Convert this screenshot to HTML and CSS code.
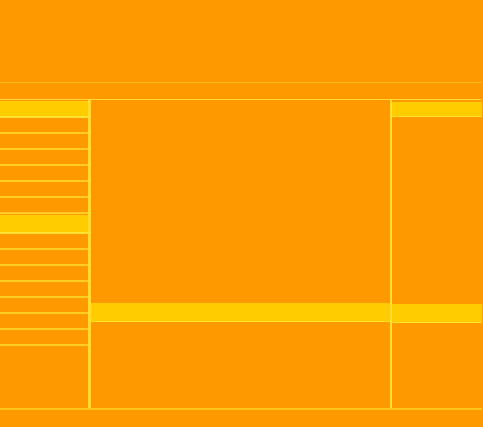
FILE: index.html
```html
<!DOCTYPE html>
<html lang="en">
<head>
  <meta charset="UTF-8" />
  <meta name="viewport" content="width=device-width, initial-scale=1.0"/>
  <title>Layout</title>
  <link rel="stylesheet" href="styles.css">
</head>
<body>
  <div class="page">
    <header class="header"></header>
    <nav class="nav"></nav>
    <div class="layout">
      <aside class="sidebar">
        <div class="item active"></div>
        <div class="item"></div>
        <div class="item"></div>
        <div class="item"></div>
        <div class="item"></div>
        <div class="item"></div>
        <div class="item"></div>
        <div class="item active tall"></div>
        <div class="item"></div>
        <div class="item"></div>
        <div class="item"></div>
        <div class="item"></div>
        <div class="item"></div>
        <div class="item"></div>
        <div class="item"></div>
      </aside>
      <main class="main">
        <div class="content"></div>
        <div class="band"></div>
      </main>
      <aside class="side">
        <div class="side-head"></div>
        <div class="content"></div>
        <div class="band"></div>
      </aside>
    </div>
    <footer class="footer"></footer>
  </div>
</body>
</html>
```

FILE: styles.css
```css
body { margin: 0; background: #ff9900; }
.page { width: 482px; height: 427px; display: flex; flex-direction: column; }
.header { height: 82px; border-bottom: 1px solid #ffbb22; }
.nav { height: 16px; border-bottom: 1px solid #ffd633; }
.layout {
  display: grid; grid-template-columns: 90px 302px 90px;
  height: 308px; border-bottom: 2px solid #ffc61a;
}
.sidebar { border-right: 2px solid #ffdd33; display: flex; flex-direction: column; }
.item { height: 14px; border-bottom: 2px solid #ffcc22; }
.item.active { background: #ffcc00; border-bottom-color: #ffe033; height: 15px; margin-top: 1px; }
.item.tall { height: 17px; }
.main { border-left: 1px solid #ffdd33; border-right: 2px solid #ffdd33; display: flex; flex-direction: column; }
.content { height: 203px; }
.band { height: 18px; background: #ffcc00; border-bottom: 1px solid #ffe033; }
.side { display: flex; flex-direction: column; }
.side-head { height: 14px; background: #ffcc00; border-bottom: 1px solid #ffe033; margin-top: 2px; }
.side .content { height: 187px; }
.footer { flex: 1; }
```
